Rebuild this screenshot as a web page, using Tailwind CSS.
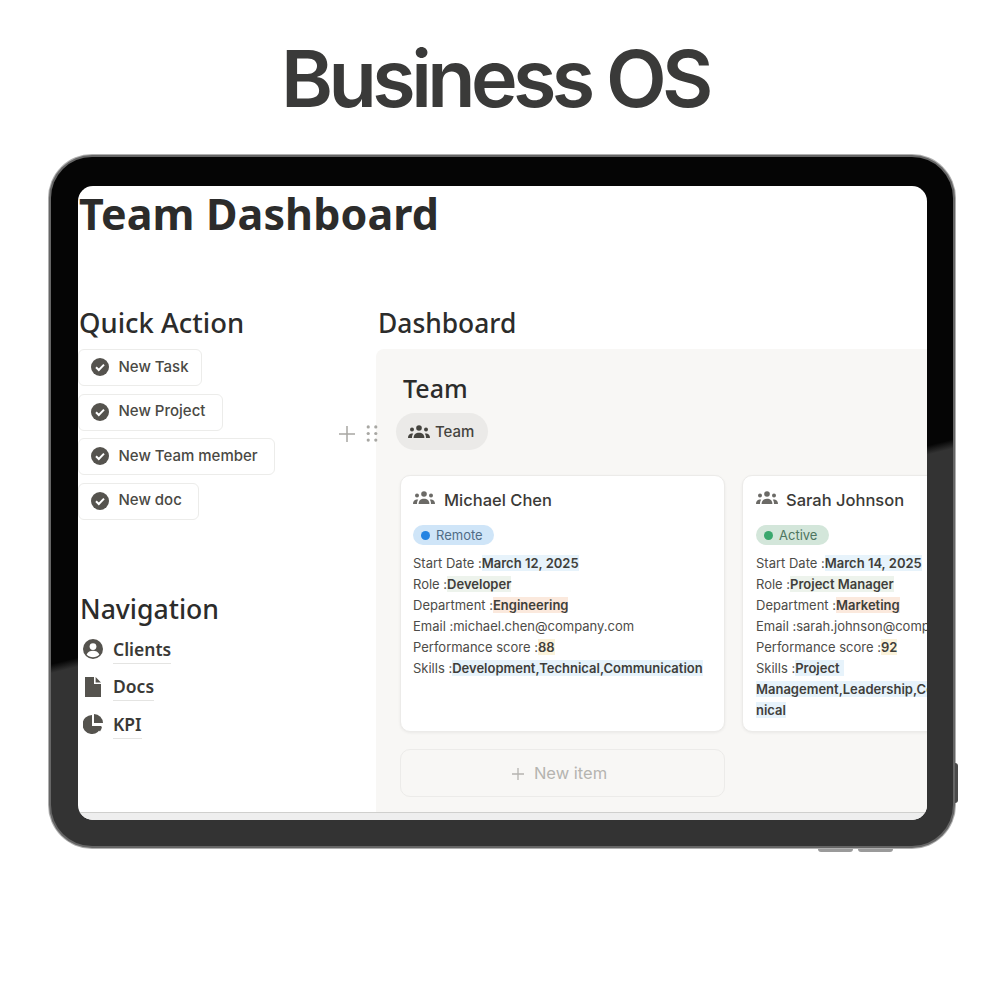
<!DOCTYPE html>
<html lang="en">
<head>
    <meta charset="UTF-8">
    <meta name="viewport" content="width=device-width, initial-scale=1.0">
    <title>Business OS</title>
    <script src="https://cdn.jsdelivr.net/npm/@tailwindcss/browser@4"></script>
</head>
<body class="bg-white font-['Inter',sans-serif]">
    <div class="w-[1005px] h-[1005px] overflow-hidden bg-white">
        <h1 class="h-[154px] pt-[35px] pr-[15px] text-center text-[79px] leading-[86px] font-semibold tracking-[-4.6px] text-[#3a3a39] font-['Inter',sans-serif]">Business OS</h1>

        <!-- tablet -->
        <div class="relative ml-[48px] w-[908px] h-[695px] rounded-[44px] p-[1px] bg-[#b0b0b0]">
            <div class="absolute right-[-2px] top-[609px] w-[3px] h-[40px] rounded-r bg-[#4a4a4a]"></div>
            <div class="absolute left-[770px] bottom-[-3px] w-[35px] h-[3px] rounded-b bg-[#9a9a9a]"></div>
            <div class="absolute left-[810px] bottom-[-3px] w-[35px] h-[3px] rounded-b bg-[#9a9a9a]"></div>
            <div class="w-full h-full rounded-[43px] p-[2px] bg-[#666666]">
                <div class="w-full h-full rounded-[41px] pt-[29px] pl-[27px] bg-[linear-gradient(166deg,#050505_0%,#050505_55.5%,#333333_56.5%,#333333_100%)]">
                    <!-- screen -->
                    <div class="w-[849px] h-[634px] rounded-[15px] overflow-hidden bg-white text-[#2f2e2b] font-['Noto_Sans',sans-serif]">
                        <div class="h-[626px] overflow-hidden">
                            <h2 class="h-[119px] pl-[1px] text-[43px] leading-[56px] font-bold tracking-[0.12px] text-[#2c2c2b]">Team Dashboard</h2>
                            <div class="flex">
                                <!-- left column -->
                                <div class="w-[298px] shrink-0">
                                    <h3 class="pl-[1px] h-[44px] text-[27.4px] leading-[36px] font-medium text-[#2c2c2b]">Quick Action</h3>
                                    <div class="flex flex-col items-start gap-[7.5px] font-['Inter',sans-serif] text-[15px] font-medium text-[#4a4944]">
                                        <button class="w-[124px] h-[37px] pl-[12px] pb-[1px] flex items-center gap-[9.5px] rounded-[6px] border border-[#ececea]">
                                            <svg class="w-[18px] h-[18px]" viewBox="0 0 18 18"><circle cx="9" cy="9" r="9" fill="#55534e"/><path d="M5 9.2l2.8 2.8L13 6.6" fill="none" stroke="#fff" stroke-width="2"/></svg>
                                            New Task
                                        </button>
                                        <button class="w-[145px] h-[37px] pl-[12px] pb-[1px] flex items-center gap-[9.5px] rounded-[6px] border border-[#ececea]">
                                            <svg class="w-[18px] h-[18px]" viewBox="0 0 18 18"><circle cx="9" cy="9" r="9" fill="#55534e"/><path d="M5 9.2l2.8 2.8L13 6.6" fill="none" stroke="#fff" stroke-width="2"/></svg>
                                            New Project
                                        </button>
                                        <button class="w-[197px] h-[37px] pl-[12px] pb-[1px] flex items-center gap-[9.5px] rounded-[6px] border border-[#ececea]">
                                            <svg class="w-[18px] h-[18px]" viewBox="0 0 18 18"><circle cx="9" cy="9" r="9" fill="#55534e"/><path d="M5 9.2l2.8 2.8L13 6.6" fill="none" stroke="#fff" stroke-width="2"/></svg>
                                            New Team member
                                        </button>
                                        <button class="w-[121px] h-[37px] pl-[12px] pb-[1px] flex items-center gap-[9.5px] rounded-[6px] border border-[#ececea]">
                                            <svg class="w-[18px] h-[18px]" viewBox="0 0 18 18"><circle cx="9" cy="9" r="9" fill="#55534e"/><path d="M5 9.2l2.8 2.8L13 6.6" fill="none" stroke="#fff" stroke-width="2"/></svg>
                                            New doc
                                        </button>
                                    </div>
                                    <h3 class="mt-[71px] pl-[2px] h-[44.5px] text-[26.6px] leading-[36px] font-medium text-[#2c2c2b]">Navigation</h3>
                                    <div class="flex flex-col items-start gap-[9px] pl-[5px] text-[17.5px] font-semibold text-[#3a3936]">
                                        <div class="flex items-center gap-[10px] h-[28.5px]">
                                            <svg class="w-[20px] h-[20px]" viewBox="0 0 20 20"><circle cx="10" cy="10" r="10" fill="#55534e"/><circle cx="10" cy="7.6" r="3.4" fill="#fff"/><path d="M3.6 15.4c1.4-2.6 3.6-3.6 6.4-3.6s5 1 6.4 3.6c-1.6 1.8-3.8 2.8-6.4 2.8s-4.8-1-6.4-2.8z" fill="#fff"/></svg>
                                            <span class="border-b border-[#e4e4e2] leading-[28px]">Clients</span>
                                        </div>
                                        <div class="flex items-center gap-[10px] h-[28.5px]">
                                            <svg class="w-[20px] h-[20px]" viewBox="0 0 20 20"><path d="M2 0h9v7h7v13H2z" fill="#55534e"/><path d="M12.6 0L18 5.4h-5.4z" fill="#55534e"/></svg>
                                            <span class="border-b border-[#e4e4e2] leading-[28px]">Docs</span>
                                        </div>
                                        <div class="flex items-center gap-[10px] h-[28.5px]">
                                            <svg class="w-[20px] h-[20px]" viewBox="0 0 20 20"><path d="M9 1a9.5 9.5 0 1 0 9.4 11H9z" fill="#55534e"/><path d="M11 0a9 9 0 0 1 9 9h-9z" fill="#55534e"/><path d="M12 12.8l5 4.6a10 10 0 0 0 2-4.6z" fill="#55534e"/></svg>
                                            <span class="border-b border-[#e4e4e2] leading-[28px]">KPI</span>
                                        </div>
                                    </div>
                                </div>

                                <!-- right column -->
                                <div class="relative min-w-0 flex-1">
                                    <div class="absolute left-[-37px] top-[120px] flex items-center gap-[11px]">
                                        <svg class="w-[16px] h-[16px]" viewBox="0 0 16 16"><path d="M8 0v16M0 8h16" stroke="#a8a7a3" stroke-width="1.5"/></svg>
                                        <svg class="w-[12px] h-[17px]" viewBox="0 0 12 18" fill="#a8a7a3"><circle cx="2" cy="2" r="1.7"/><circle cx="10" cy="2" r="1.7"/><circle cx="2" cy="9" r="1.7"/><circle cx="10" cy="9" r="1.7"/><circle cx="2" cy="16" r="1.7"/><circle cx="10" cy="16" r="1.7"/></svg>
                                    </div>
                                    <h3 class="pl-[2px] h-[44px] text-[26.4px] leading-[36px] font-medium text-[#2c2c2b]">Dashboard</h3>
                                    <div class="h-[500px] w-[600px] rounded-tl-[8px] pl-[20px] pt-[21px] bg-[#f8f7f5] font-['Inter',sans-serif]">
                                        <div class="pl-[7px] h-[43px] text-[25px] leading-[36px] font-medium font-['Noto_Sans',sans-serif] text-[#2c2c2b]">Team</div>
                                        <div class="h-[37px] w-[92px] pl-[12px] pt-[2px] flex items-center gap-[5px] rounded-full bg-[#ebeae8] text-[15px] font-medium text-[#45443f]">
                                            <svg class="w-[22px] h-[14px] -mt-[2px]" viewBox="0 0 22 14" fill="#45443f"><circle cx="11" cy="3" r="2.8"/><circle cx="4" cy="4.6" r="2"/><circle cx="18" cy="4.6" r="2"/><path d="M5.6 13c0-3.4 2.2-5.2 5.4-5.2s5.4 1.8 5.4 5.2z"/><path d="M0 13c0-2.4 1.2-4 3.4-4.4.8-.1 1.4 0 1.8.2-.8 1-1.2 2.4-1.2 4.2zM22 13c0-2.4-1.2-4-3.4-4.4-.8-.1-1.4 0-1.8.2.8 1 1.2 2.4 1.2 4.2z"/></svg>
                                            Team
                                        </div>
                                        <div class="mt-[25px] ml-[4px] flex gap-[17px]">
                                            <!-- Michael -->
                                            <div class="flex flex-col w-[325px] shrink-0">
                                                <div class="h-[257px] rounded-[10px] border border-[#ecebe9] bg-white pl-[12px] pt-[12px] shadow-[0_1px_3px_rgba(0,0,0,0.06)] text-[13px] leading-[21px] text-[#4d4c48]">
                                                    <div class="flex items-center gap-[9px] h-[24px] text-[16.5px] font-medium text-[#3b3a37]">
                                                        <svg class="w-[22px] h-[14px] -mt-[4px]" viewBox="0 0 22 14" fill="#6b6a66"><circle cx="11" cy="3" r="2.8"/><circle cx="4" cy="4.6" r="2"/><circle cx="18" cy="4.6" r="2"/><path d="M5.6 13c0-3.4 2.2-5.2 5.4-5.2s5.4 1.8 5.4 5.2z"/><path d="M0 13c0-2.4 1.2-4 3.4-4.4.8-.1 1.4 0 1.8.2-.8 1-1.2 2.4-1.2 4.2zM22 13c0-2.4-1.2-4-3.4-4.4-.8-.1-1.4 0-1.8.2.8 1 1.2 2.4 1.2 4.2z"/></svg>
                                                        Michael Chen
                                                    </div>
                                                    <div class="mt-[13px] mb-[8px] w-[81px] h-[20px] flex items-center gap-[6px] pl-[8px] rounded-full bg-[#cfe5f8] text-[#4f6c86]"><span class="w-[9px] h-[9px] rounded-full bg-[#2383e2]"></span>Remote</div>
                                                    <p>Start Date :<b class="font-semibold bg-[#e7f3fb] text-[#3f3e3a]">March 12, 2025</b></p>
                                                    <p>Role :<b class="font-semibold bg-[#edf3ec] text-[#3f3e3a]">Developer</b></p>
                                                    <p>Department :<b class="font-semibold bg-[#fbe9dd] text-[#3f3e3a]">Engineering</b></p>
                                                    <p>Email :michael.chen@company.com</p>
                                                    <p>Performance score :<b class="font-semibold bg-[#fbf3db] text-[#3f3e3a]">88</b></p>
                                                    <p>Skills :<b class="font-semibold bg-[#e7f3fb] text-[#3f3e3a]">Development,Technical,Communication</b></p>
                                                </div>
                                                <div class="mt-[17px] pr-[6px] pt-[1px] h-[48px] flex items-center justify-center gap-[10px] rounded-[10px] border border-[#ecebe9] text-[16.5px] text-[#b5b4b0]">
                                                    <svg class="w-[12px] h-[12px]" viewBox="0 0 12 12"><path d="M6 0v12M0 6h12" stroke="#b5b4b0" stroke-width="1.3"/></svg>
                                                    New item
                                                </div>
                                            </div>
                                            <!-- Sarah -->
                                            <div class="w-[325px] h-[257px] shrink-0 rounded-[10px] border border-[#ecebe9] bg-white pl-[13px] pt-[12px] shadow-[0_1px_3px_rgba(0,0,0,0.06)] text-[13px] leading-[21px] text-[#4d4c48]">
                                                <div class="flex items-center gap-[8px] h-[24px] text-[16.5px] font-medium text-[#3b3a37]">
                                                    <svg class="w-[22px] h-[14px] -mt-[4px]" viewBox="0 0 22 14" fill="#6b6a66"><circle cx="11" cy="3" r="2.8"/><circle cx="4" cy="4.6" r="2"/><circle cx="18" cy="4.6" r="2"/><path d="M5.6 13c0-3.4 2.2-5.2 5.4-5.2s5.4 1.8 5.4 5.2z"/><path d="M0 13c0-2.4 1.2-4 3.4-4.4.8-.1 1.4 0 1.8.2-.8 1-1.2 2.4-1.2 4.2zM22 13c0-2.4-1.2-4-3.4-4.4-.8-.1-1.4 0-1.8.2.8 1 1.2 2.4 1.2 4.2z"/></svg>
                                                    Sarah Johnson
                                                </div>
                                                <div class="mt-[13px] mb-[8px] w-[73px] h-[20px] flex items-center gap-[6px] pl-[8px] rounded-full bg-[#d3e6da] text-[#4e7560]"><span class="w-[9px] h-[9px] rounded-full bg-[#3aa76d]"></span>Active</div>
                                                <p class="whitespace-nowrap">Start Date :<b class="font-semibold bg-[#e7f3fb] text-[#3f3e3a]">March 14, 2025</b></p>
                                                <p class="whitespace-nowrap">Role :<b class="font-semibold bg-[#edf3ec] text-[#3f3e3a]">Project Manager</b></p>
                                                <p class="whitespace-nowrap">Department :<b class="font-semibold bg-[#fbe9dd] text-[#3f3e3a]">Marketing</b></p>
                                                <p class="whitespace-nowrap">Email :sarah.johnson@company.com</p>
                                                <p class="whitespace-nowrap">Performance score :<b class="font-semibold bg-[#fbf3db] text-[#3f3e3a]">92</b></p>
                                                <p class="whitespace-nowrap">Skills :<b class="font-semibold bg-[#e7f3fb] text-[#3f3e3a] pr-[4px]">Project</b></p>
                                                <p class="whitespace-nowrap"><b class="font-semibold bg-[#e7f3fb] text-[#3f3e3a]">Management,Leadership,Communication,Tech</b></p>
                                                <p class="whitespace-nowrap"><b class="font-semibold bg-[#e7f3fb] text-[#3f3e3a]">nical</b></p>
                                            </div>
                                        </div>
                                    </div>
                                </div>
                            </div>
                        </div>
                        <div class="h-[8px] border-t border-[#cfcfcd] bg-[#eeeeee]"></div>
                    </div>
                </div>
            </div>
        </div>
    </div>
</body>
</html>
